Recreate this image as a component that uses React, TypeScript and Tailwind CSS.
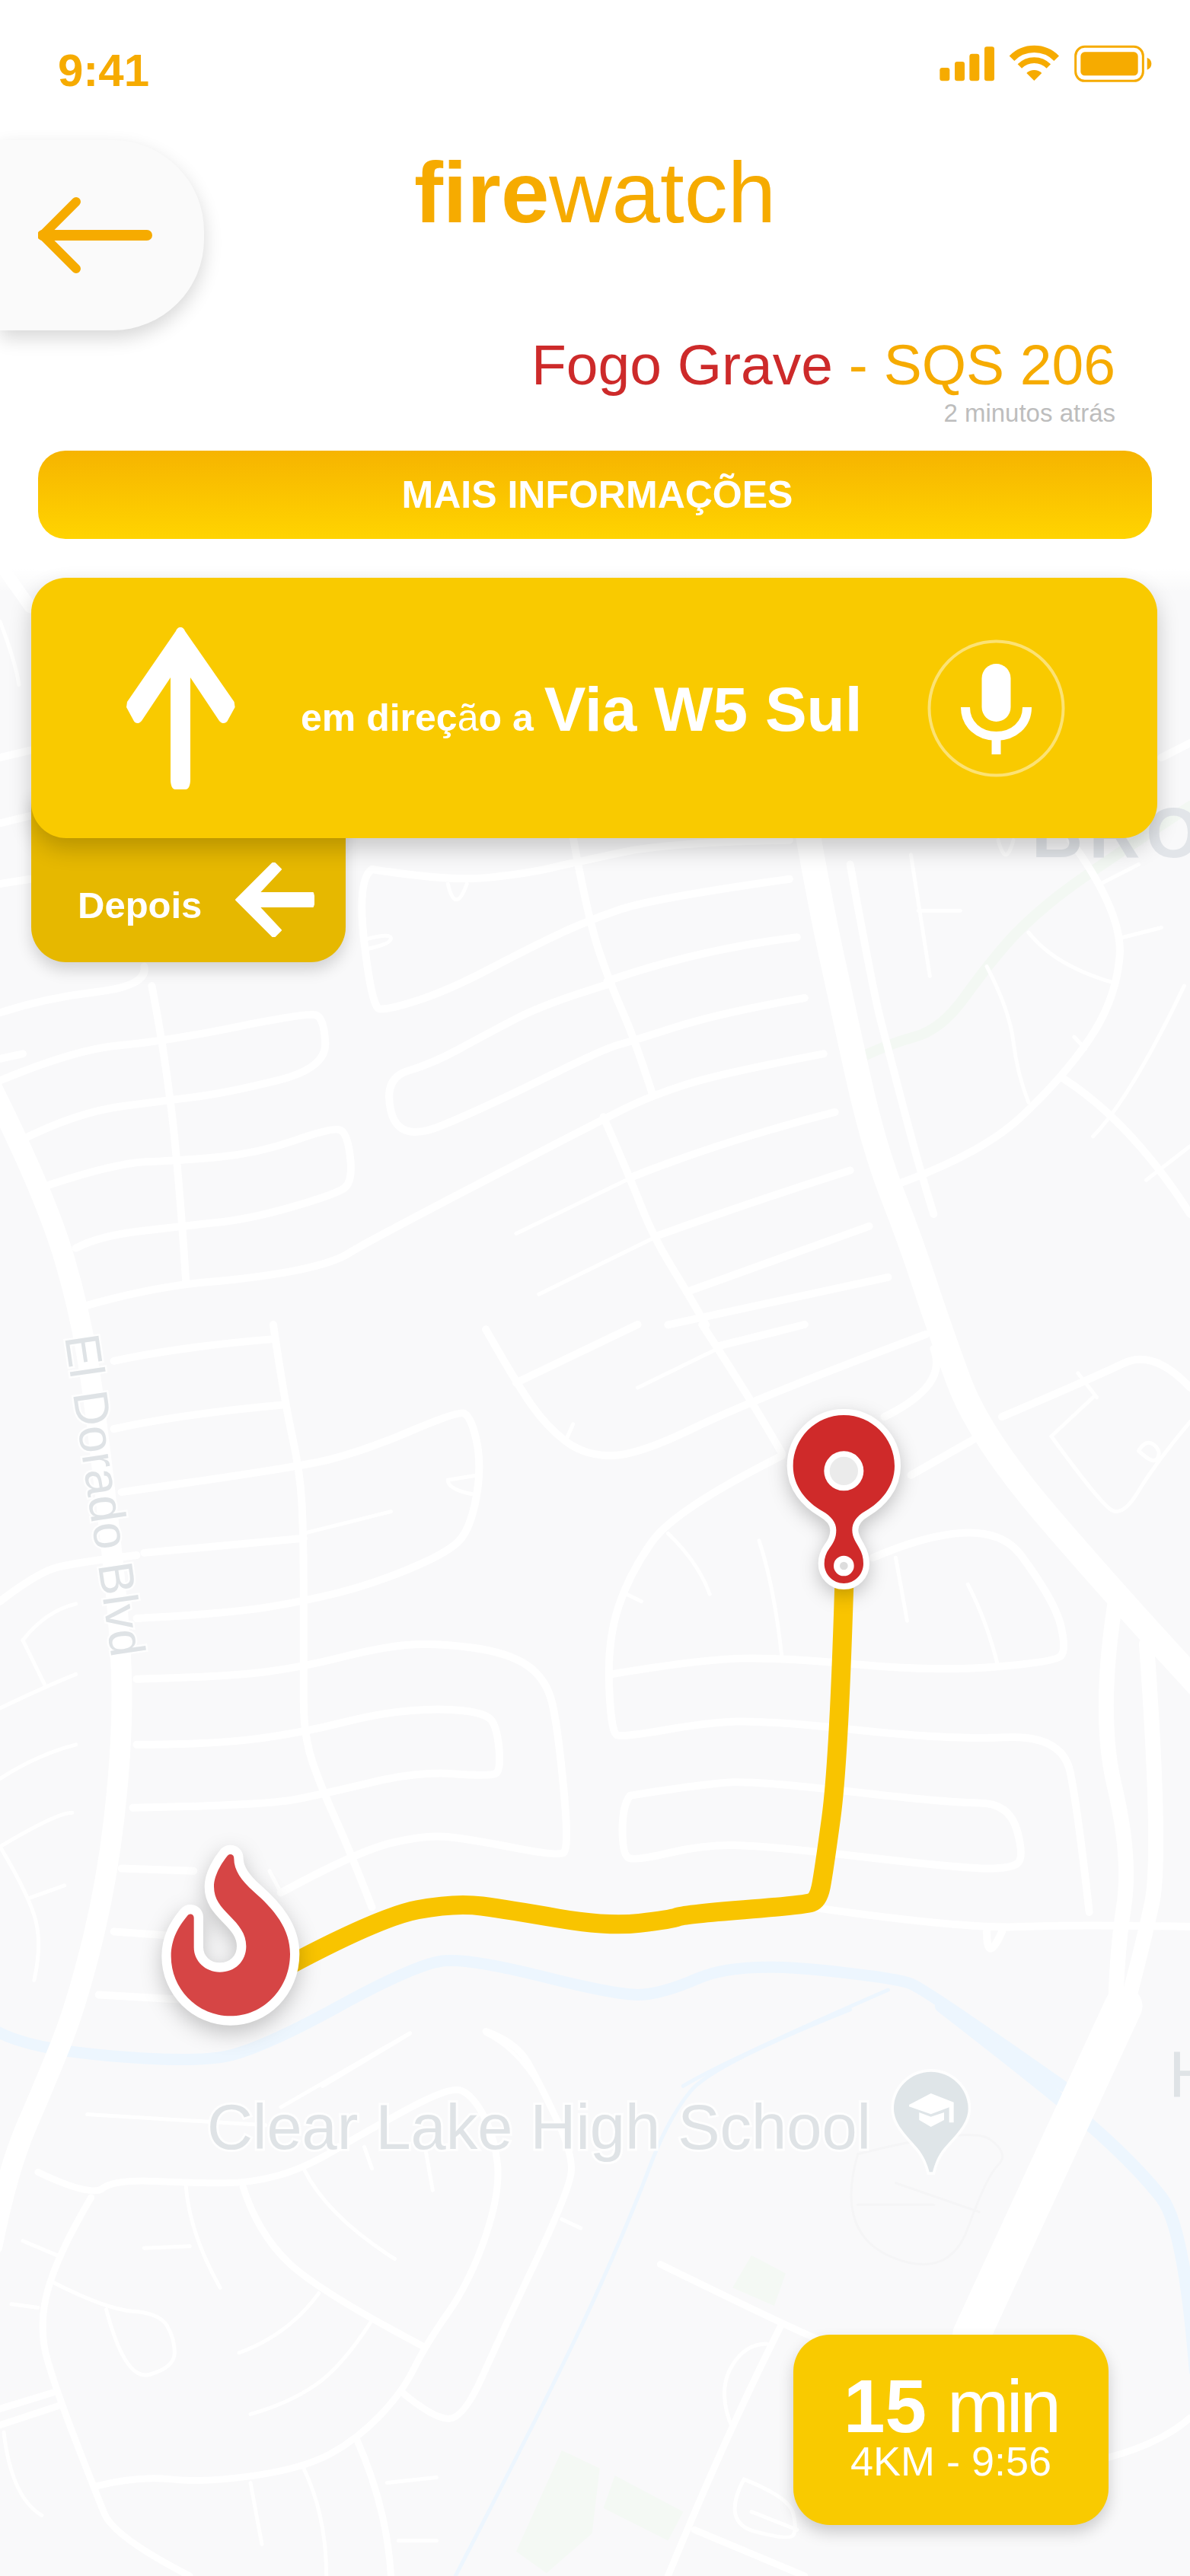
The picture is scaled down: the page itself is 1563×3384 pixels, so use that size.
import React from "react";

// points are written in the coordinates of the crop they were traced from,
// the <g> transform puts them back on the page
const smooth = (pts: string) => {
  const p = pts
    .trim()
    .split(/\s+/)
    .map((s) => s.split(",").map(Number));
  if (p.length < 3) return `M${p[0]} L${p[p.length - 1]}`;
  let d = `M${p[0][0]},${p[0][1]}`;
  for (let i = 1; i < p.length - 1; i++) {
    const mx = (p[i][0] + p[i + 1][0]) / 2;
    const my = (p[i][1] + p[i + 1][1]) / 2;
    d += ` Q${p[i][0]},${p[i][1]} ${i === p.length - 2 ? p[i + 1][0] : mx},${i === p.length - 2 ? p[i + 1][1] : my}`;
  }
  return d;
};

const Lines = ({ list, width, color = "#ffffff" }: { list: string[]; width: number; color?: string }) => (
  <>
    {list.map((pts, i) => (
      <path
        key={i}
        d={smooth(pts)}
        fill="none"
        stroke={color}
        strokeWidth={width}
        strokeLinecap="round"
        strokeLinejoin="round"
        vectorEffect="non-scaling-stroke"
      />
    ))}
  </>
);

// long roads, page coordinates
const mainRoad = "1060,1090 1078,1190 1105,1315 1147,1505 1197,1633 1232,1740 1286,1887 1466,2097 1580,2220";
const leftRoad = "-10,1430 60,1570 110,1740 135,1930 160,2160 160,2300 140,2475 100,2635 60,2735 10,2850 -10,2950";
const rightRoadA = "1466,2097 1441,2250 1486,2440 1466,2570 1465,2650";
const rightRoadB = "1506,2160 1526,2440 1500,2560 1476,2650";

const upperMid = [
  "0,925 60,895 195,870 190,830",
  "200,870 215,990 235,1240 245,1480",
  "0,1065 100,1000 215,985 405,925 427,935 430,1040 300,1090 225,1105 100,1130 25,1190",
  "55,1285 150,1235 235,1230 340,1215 440,1160 458,1175 465,1275 440,1300 330,1350 240,1365 130,1385 100,1410",
  "110,1530 200,1490 345,1470 440,1440 480,1400 800,1140 860,1095 950,1050 1085,1010",
  "755,565 775,735 805,870 835,975 860,1095",
  "795,1140 830,1265 860,1385 905,1500 930,1568",
  "490,630 470,650 490,915 510,920 590,880 700,790 775,735 860,690 1040,650",
  "490,630 590,655 690,640 760,615 880,575 1040,570",
  "805,865 720,905 640,970 570,1030 505,1060 525,1195 640,1120 795,1000 830,985 950,925 1060,895",
  "800,860 920,795 1050,770",
  "830,1265 950,1190 1100,1130",
  "865,1385 1000,1310 1120,1250",
  "905,1500 1145,1365",
  "880,1568 1170,1470",
  "1120,620 1150,880 1170,1000 1210,1240 1230,1340",
  "1170,1285 1290,1220 1400,1060 1470,900 1480,720 1410,570",
  "1400,1060 1490,1150 1568,1340",
  "0,1020 30,1010",
  "0,660 40,650",
  "0,535 40,520",
  "0,400 40,385",
  "1530,400 1568,370",
];
const upperThin = [
  "590,660 600,725 615,660",
  "480,775 515,760 515,785 480,795",
  "680,1380 825,1270",
  "710,1505 860,1390",
  "1200,600 1225,850",
  "1210,715 1265,715",
  "1300,830 1330,920 1340,1050 1355,1110",
  "1355,760 1390,830 1470,865",
  "1480,770 1530,750",
  "1440,1180 1490,1100 1560,870",
  "1450,660 1500,620",
  "1315,570 1325,630 1335,570",
  "1510,1270 1568,1200",
  "1415,975 1430,1000",
  "0,120 20,200 25,250",
];
const midMid = [
  "150,75 240,45 360,30",
  "360,0 375,160 395,300 400,430 400,700 400,850 425,960 460,1080 490,1200",
  "150,215 235,185 375,165",
  "160,345 390,295 480,260 600,180 620,185 635,290 620,420 590,470 490,535 400,570 300,595 180,605",
  "190,470 400,440",
  "0,570 50,510 100,490 180,475",
  "180,730 300,725 400,705 500,665 570,655 670,675 720,730 735,830 750,1080 735,1095 620,1060 560,1050 470,1085 370,1170",
  "180,865 280,865 400,840 500,800 580,790 640,800 655,830 660,920 645,930 550,920 430,965 350,990 175,995",
  "160,1120 255,1125",
  "150,1250 240,1260",
  "130,1380 240,1390",
  "640,10 680,120 720,210 770,270 840,270 990,155 1220,20",
  "680,120 840,0",
  "925,0 990,155 1030,265",
  "945,45 1060,0",
  "1200,310 1290,230",
  "1165,190 1250,125 1230,50",
  "1030,270 890,380 830,510 800,650 805,840 820,850 930,820 1010,815 1250,855 1400,845 1420,1000 1435,1210",
  "805,720 920,690 1030,685 1230,715 1390,695 1405,670 1390,570 1300,380 1150,480",
  "830,970 930,945 1000,940 1250,985 1330,985 1350,1100 1330,1120 1270,1120 1020,1075 930,1070 835,1105 820,1090 820,990 830,970",
  "1070,1200 1270,1245 1420,1235 1568,1240",
  "1300,1250 1300,1320 1320,1250",
  "1320,190 1440,110 1520,50 1568,130",
];
const midThin = [
  "400,430 515,385",
  "590,320 590,340 625,350",
  "590,320 630,310",
  "0,790 60,745 100,720",
  "0,935 50,885 100,865",
  "30,650 60,745",
  "30,650 60,590 100,575",
  "0,1075 75,1005 95,1005",
  "0,1075 40,1180 55,1280 45,1350",
  "40,1180 85,1155",
  "745,240 755,205",
  "840,130 945,50",
  "1030,685 1020,540 1000,445",
  "880,430 920,490 935,555",
  "825,555 845,570",
  "1180,480 1195,610",
  "1275,535 1300,610 1315,705",
  "1385,230 1440,150",
  "1385,230 1450,370 1480,395 1520,290 1568,200",
  "1420,100 1445,150",
  "1500,260 1510,235 1530,260 1520,290 1500,260",
  "355,1125 370,1170",
  "425,1568 540,1460",
  "640,1460 680,1490 710,1568",
];
const lowerThick = ["1480,-10 1280,900"];
const lowerMid = [
  "50,450 120,520 150,470 260,480 330,480 400,440 480,340 590,215 620,230 650,340 660,500 620,750 560,930 530,1060 470,1190 400,1270 270,1310 180,1290 125,1320",
  "120,520 75,680 50,880 75,1060 125,1330 150,1460 250,1568",
  "0,1105 70,1060",
  "0,1150 80,1095",
  "530,1060 570,1130 610,1135 660,900 750,500 755,400 710,200 680,90 640,60",
  "320,490 340,620 420,780 560,935",
  "470,1190 510,1380 515,1568",
  "870,705 1030,870 1080,915",
  "1030,870 960,1160 880,1568",
  "915,1440 1060,1568",
  "1460,1240 1530,1200 1568,1130",
];
const lowerThin = [
  "30,640 75,680",
  "70,755 140,830 210,840 230,910 230,990 165,1030 140,830",
  "15,815 50,825",
  "245,490 250,620 290,770",
  "190,660 250,655",
  "400,440 430,570 520,690",
  "420,785 380,900 315,950",
  "490,860 450,990 380,1090 330,1120",
  "740,580 765,605",
  "510,1310 575,1295",
  "400,1270 430,1400 430,1568",
  "330,1310 345,1480",
  "525,1470 575,1470",
  "115,290 350,320",
  "540,65 370,270",
  "560,380 570,500",
  "480,380 490,440",
  "1010,925 980,925 945,1060 965,1160",
  "980,1300 1040,1350 1050,1440 1040,1470 950,1420 980,1300",
  "990,1390 1050,1440",
  "5,1170 15,1350 55,1400",
];
const school = ["1130,400 1100,620 1250,750 1300,460 1330,400 1280,320 1130,400", "1180,480 1290,560", "1130,540 1230,540"];

const MapLayer = () => (
  <svg className="absolute inset-0" width={1563} height={3384} viewBox="0 0 1563 3384" style={{ fontFamily: "'Liberation Sans', Arial, sans-serif" }}>
    <defs>
      <linearGradient id="fade" x1="0" y1="0" x2="0" y2="1">
        <stop offset="0" stopColor="#ffffff" />
        <stop offset="1" stopColor="#ffffff" stopOpacity="0" />
      </linearGradient>
    </defs>
    <rect width={1563} height={3384} fill="#f9f9fa" />

    {/* greens */}
    <g transform="translate(0,740) scale(0.997,0.638)">
      <Lines list={["1130,1020 1170,990 1240,960 1300,830 1350,740 1430,640 1568,500"]} width={14} color="#f3f8f3" />
    </g>
    <g transform="translate(0,2640) scale(0.997,0.4745)">
      <path d="M990,680 L1035,730 L1020,820 L965,770 Z" fill="#f4f9f4" />
      <path d="M740,1220 L790,1270 L780,1450 L720,1560 L680,1500 Z" fill="#f4f9f4" />
      <path d="M810,1290 L900,1390 L880,1470 L795,1380 Z" fill="#f4f9f4" />
    </g>

    {/* water */}
    <g transform="translate(0,1740) scale(0.997,0.638)">
      <Lines list={["-10,1450 30,1490 250,1520 340,1495 550,1315 620,1305 810,1380 870,1380 970,1312 1180,1345 1220,1370 1400,1568"]} width={15} color="#edf6fe" />
      <Lines list={["900,1568 950,1520 1170,1370"]} width={5} color="#edf6fe" />
    </g>
    <g transform="translate(0,2640) scale(0.997,0.4745)">
      <Lines list={["1240,-10 1400,250 1500,440 1560,600 1575,1000"]} width={17} color="#edf6fe" />
      <Lines list={["1120,0 940,150 880,300 830,580 740,1000 600,1568"]} width={5} color="#edf6fe" />
    </g>

    {/* roads */}
    <g transform="translate(0,740) scale(0.997,0.638)">
      <Lines list={upperMid} width={10} />
      <Lines list={upperThin} width={5} />
      <Lines list={["-10,-20 40,90"]} width={16} />
    </g>
    <g transform="translate(0,1740) scale(0.997,0.638)">
      <Lines list={midMid} width={10} />
      <Lines list={midThin} width={5} />
    </g>
    <g transform="translate(0,2640) scale(0.997,0.4745)">
      <Lines list={school} width={3} color="#f5f5f6" />
      <Lines list={lowerThick} width={50} />
      <Lines list={lowerMid} width={9} />
      <Lines list={lowerThin} width={5} />
    </g>
    <Lines list={[mainRoad]} width={33} />
    <Lines list={[leftRoad]} width={27} />
    <Lines list={[rightRoadA, rightRoadB]} width={20} />

    {/* fade to the white header */}
    <rect y={0} width={1563} height={748} fill="#ffffff" />
    <rect y={748} width={1563} height={30} fill="url(#fade)" />

    {/* labels */}
    <text x={1355} y={1126} fontSize={93} fontWeight={700} letterSpacing={8} fill="#e2e5e9">
      BRO
    </text>
    <text
      transform="translate(85,1756) rotate(81.7)"
      fontSize={64}
      fill="#dfe3e6"
      stroke="#ffffff"
      strokeWidth={5}
      strokeOpacity={0.8}
      paintOrder="stroke"
    >
      El Dorado Blvd
    </text>
    <text x={272} y={2823} fontSize={83} fill="#dfe3e6" stroke="#ffffff" strokeWidth={6} strokeOpacity={0.8} paintOrder="stroke">
      Clear Lake High School
    </text>
    <text x={1535} y={2754} fontSize={85} fill="#dfe3e6">
      H
    </text>
    <g transform="translate(1150,2690) scale(0.3333)">
      <path
        d="M218,95 C298,95 365,160 365,240 C365,300 310,350 270,395 C245,425 232,460 225,490 L212,490 C205,460 190,425 165,395 C125,350 72,300 72,240 C72,160 138,95 218,95 Z"
        fill="#dfe5e8"
        stroke="#ffffff"
        strokeOpacity={0.8}
        strokeWidth={22}
        paintOrder="stroke"
      />
      <path d="M132,225 L218,180 L308,215 L308,295 L290,295 L290,235 L218,262 L132,232 Z" fill="#ffffff" />
      <path d="M172,255 L218,272 L270,255 L270,285 L218,312 L172,285 Z" fill="#ffffff" />
    </g>

    {/* route */}
    <g transform="translate(0,1740) scale(0.997,0.638)">
      <Lines
        list={["1112,540 1105,900 1085,1130 1078,1185 1060,1195 900,1215 885,1225 800,1240 670,1205 600,1190 500,1220 380,1320"]}
        width={25}
        color="#f9c400"
      />
    </g>
  </svg>
);

const FlamePin = () => (
  <svg
    className="absolute left-[180px] top-[2400px] drop-shadow-[0_10px_14px_rgba(0,0,0,0.22)]"
    width={240}
    height={300}
    viewBox="0 0 720 900"
  >
    <path
      d="M368,108 C378,108 382,115 382,125 C382,170 410,210 460,255 C540,325 603,400 603,500 C603,640 495,745 368,745 C240,745 134,640 134,510 C134,440 165,390 200,348 C208,340 224,342 224,358 L224,475 C224,530 270,572 326,572 C385,572 430,530 430,470 C430,420 400,385 365,350 C330,315 303,285 303,235 C303,190 335,140 358,112 C361,109 364,108 368,108 Z"
      fill="#d64545"
      stroke="#ffffff"
      strokeWidth={74}
      strokeLinejoin="round"
      paintOrder="stroke"
    />
  </svg>
);

const DestinationPin = () => (
  <svg
    className="absolute left-[1000px] top-[1830px] drop-shadow-[0_8px_12px_rgba(0,0,0,0.22)]"
    width={200}
    height={280}
    viewBox="0 0 600 840"
  >
    <path
      d="M325,87 C435,87 525,177 525,287 C525,370 470,430 410,465 C375,485 358,510 358,540 C358,570 375,590 385,610 C397,630 402,650 402,672 C402,715 368,750 325,750 C282,750 248,715 248,672 C248,650 255,630 268,612 C285,590 295,570 295,540 C295,510 275,485 240,465 C180,430 125,370 125,287 C125,177 215,87 325,87 Z"
      fill="#cf2a2a"
      stroke="#ffffff"
      strokeWidth={48}
      strokeLinejoin="round"
      paintOrder="stroke"
    />
    <circle cx={325} cy={307} r={67} fill="#ebebeb" stroke="#ffffff" strokeWidth={22} />
    <circle cx={325} cy={681} r={28} fill="#dddddd" stroke="#ffffff" strokeWidth={24} />
  </svg>
);

const StatusIcons = () => (
  <svg width={363} height={100} viewBox="0 0 1089 300" fill="#f6ab00">
    <rect x={103} y={177} width={39} height={52} rx={10} />
    <rect x={162} y={153} width={39} height={76} rx={10} />
    <rect x={220} y={122} width={39} height={107} rx={10} />
    <rect x={279} y={94} width={39} height={135} rx={10} />
    <g fill="none" stroke="#f6ab00">
      <path d="M387,140 A124,124 0 0 1 563,140" strokeWidth={28} />
      <path d="M418,171 A80,80 0 0 1 532,171" strokeWidth={23} />
    </g>
    <path d="M445,198 A43,43 0 0 1 505,198 L475,228 Z" />
    <rect x={638} y={94} width={266} height={135} rx={36} fill="none" stroke="#f6ab00" strokeWidth={9} />
    <rect x={658} y={115} width={226} height={93} rx={16} />
    <path d="M920,137 C932,142 937,150 937,161 C937,172 932,180 920,185 Z" />
  </svg>
);

const App = () => {
  return (
    <div
      className="relative flex h-[3384px] w-[1563px] flex-col overflow-hidden bg-white"
      style={{ fontFamily: "'Liberation Sans', Arial, sans-serif" }}
    >
      <MapLayer />
      <DestinationPin />
      <FlamePin />

      <div className="relative z-10 flex h-[184px] items-start justify-between pt-[30px]">
        <span className="ml-[76px] mt-[29px] text-[60px] font-bold leading-[68px] text-[#f6ab00]">9:41</span>
        <StatusIcons />
      </div>

      <div className="relative z-10 grid h-[250px] grid-cols-[268px_1fr_268px]">
        <div className="flex h-[250px] items-center rounded-r-[120px] bg-[#fafafa] pl-[50px] shadow-[0_10px_24px_rgba(0,0,0,0.16)]">
          <svg width={150} height={100} viewBox="0 0 150 100" fill="none" stroke="#f6ab00" strokeLinecap="round" strokeLinejoin="round">
            <path d="M6,50 H143" strokeWidth={14} />
            <path d="M50,6 L6,50 L50,94" strokeWidth={12} />
          </svg>
        </div>
        <div className="pt-[4px] text-center text-[114px] leading-[130px] text-[#f6ab00]">
          <span className="font-bold">fire</span>
          <span>watch</span>
        </div>
      </div>

      <div className="relative z-10 pr-[98px] pt-[2px] text-right">
        <div className="text-[75px] leading-[86px]">
          <span className="text-[#cd2a2a]">Fogo Grave</span>
          <span className="text-[#f6ab00]"> - SQS 206</span>
        </div>
        <div className="mt-[2px] text-[33px] leading-[38px] text-[#bdbdbd]">2 minutos atrás</div>
      </div>

      <div className="relative z-10 mx-[50px] mt-[30px] flex h-[116px] items-center justify-center rounded-[36px] bg-gradient-to-b from-[#f6b400] to-[#ffd400] pl-[6px] text-[50px] font-bold text-white">
        MAIS INFORMAÇÕES
      </div>

      <div className="relative z-20 ml-[41px] mt-[51px] flex h-[342px] w-[1479px] items-center justify-between rounded-[46px] bg-[#f9ca00] pl-[125px] pr-[121px] shadow-[0_14px_30px_rgba(0,0,0,0.2)]">
        <div className="flex items-center">
          <svg width={143} height={213} viewBox="0 0 143 213" fill="#ffffff">
            <path d="M71,0 C74,0 76,2 77,5 L141.6,98 L142.6,105 L132.5,123.6 C130,127 125,127 122,123 L84,66 V200 C84,209 81,213 78,213 H64 C61,213 58,209 58,200 V66 L20,123 C17,127 12,127 10,123.6 L0,105 L1,98 L65,5 C66,2 68,0 71,0 Z" />
          </svg>
          <div className="ml-[86px] mt-[4px] flex items-baseline text-white">
            <span className="text-[50px] font-bold leading-none">
              em direç<span className="font-normal">ã</span>o a
            </span>
            <span className="ml-[14px] text-[82px] font-bold leading-none">Via W5 Sul</span>
          </div>
        </div>
        <svg width={181} height={181} viewBox="0 0 181 181" fill="none">
          <circle cx={90.5} cy={90.5} r={88} stroke="#ffffff" strokeOpacity={0.45} strokeWidth={4} />
          <rect x={71.5} y={32} width={38} height={76} rx={19} fill="#ffffff" />
          <path d="M50,89 C50,112 68,127 90.5,127 C113,127 131,112 131,89" stroke="#ffffff" strokeWidth={12} />
          <path d="M90.5,127 V151" stroke="#ffffff" strokeWidth={12} />
        </svg>
      </div>

      <div className="relative z-10 -mt-[60px] ml-[41px] flex h-[223px] w-[413px] items-end justify-between rounded-b-[46px] bg-[#e6b800] pb-[32px] pl-[61px] pr-[41px] shadow-[0_10px_20px_rgba(0,0,0,0.16)]">
        <span className="mb-[15px] text-[49px] font-bold leading-[56px] text-white">Depois</span>
        <svg width={104} height={100} viewBox="0 0 104 100" fill="#ffffff" stroke="#ffffff" strokeWidth={2} strokeLinejoin="round">
          <path d="M1,50 L49,2 L52,2 L60,10 L31,41 H102 L103,45 V56 L102,59 H31 L60,90 L52,98 L49,98 Z" />
        </svg>
      </div>

      <div className="relative z-10 mb-[67px] ml-[1042px] mt-auto flex h-[250px] w-[414px] flex-col items-center rounded-[48px] bg-[#f9ca00] pt-[42px] text-white shadow-[0_10px_20px_rgba(0,0,0,0.18)]">
        <div className="flex items-baseline text-[98px] leading-[104px]">
          <span className="font-bold">15</span>
          <span className="ml-[27px] tracking-[-4px]">min</span>
        </div>
        <div className="-mt-[10px] text-[54px] leading-[60px]">4KM - 9:56</div>
      </div>
    </div>
  );
};

export default App;
